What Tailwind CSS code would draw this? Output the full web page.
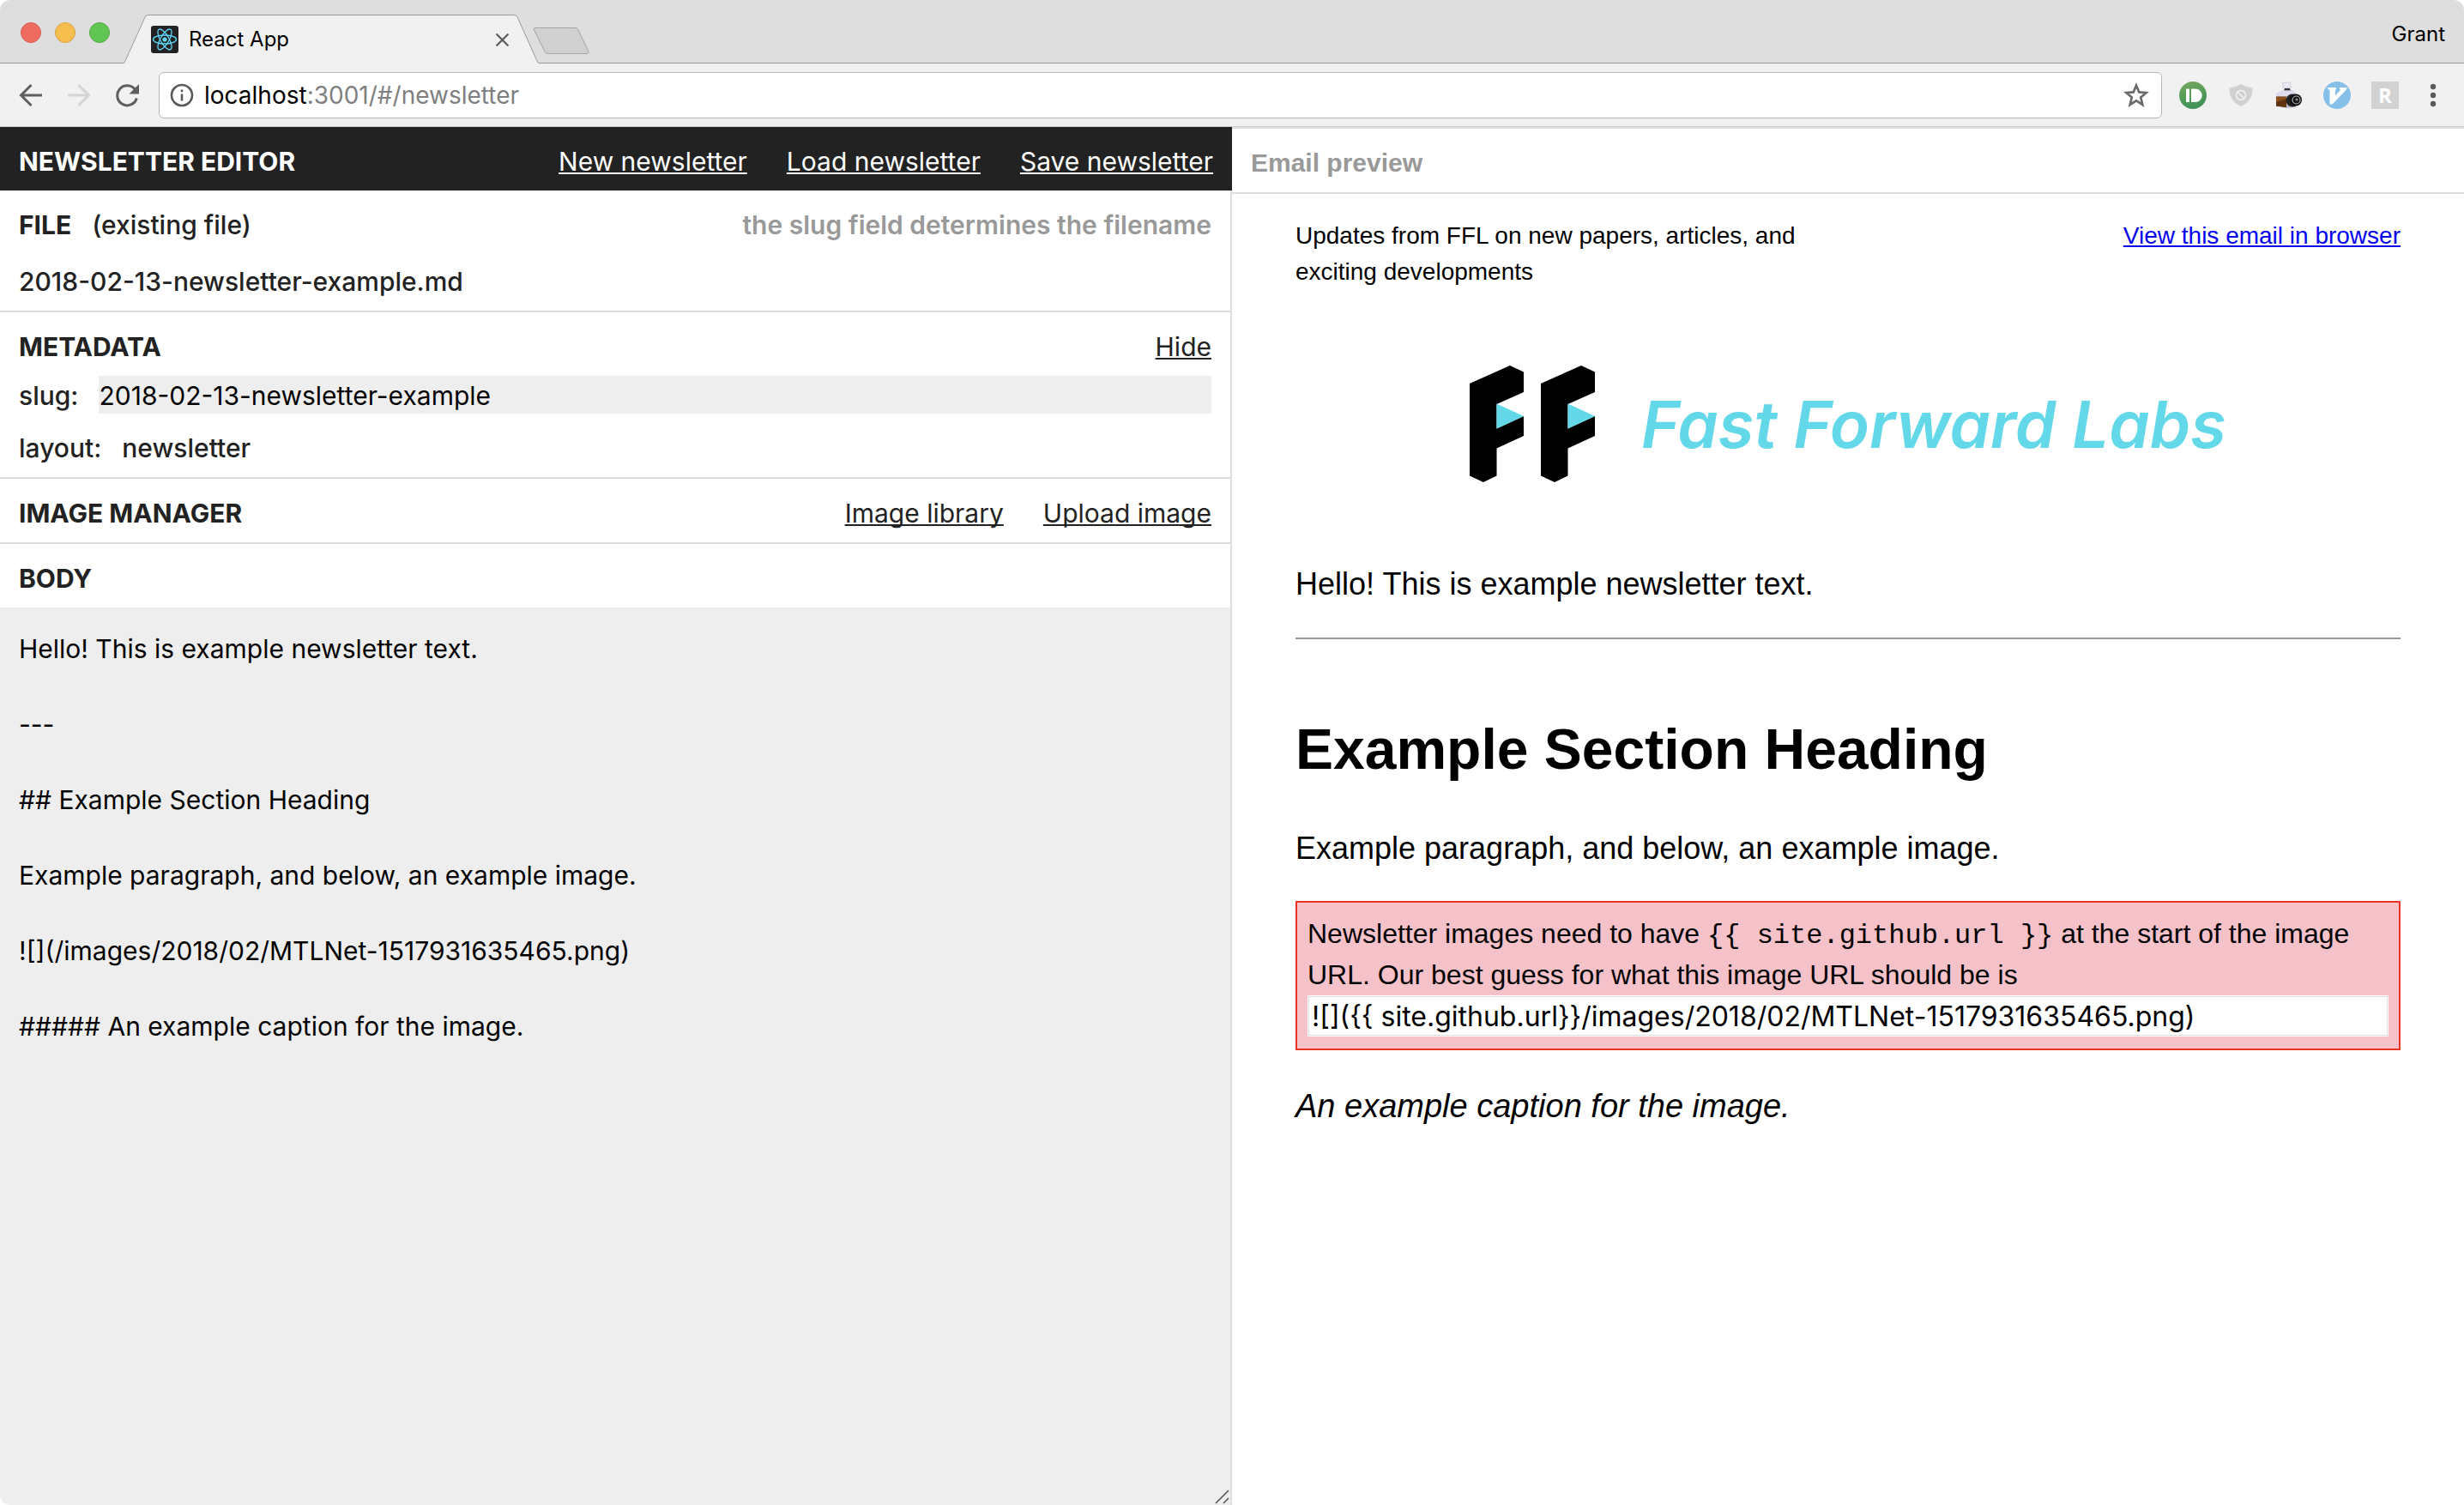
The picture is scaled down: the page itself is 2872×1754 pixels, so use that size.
<!DOCTYPE html>
<html lang="en">
<head>
<meta charset="utf-8">
<meta name="viewport" content="width=device-width, initial-scale=1">
<title>React App</title>
<script src="https://cdn.jsdelivr.net/npm/@tailwindcss/browser@4"></script>
</head>
<body class="bg-white font-['Inter',sans-serif] text-black">
<div class="flex h-screen flex-col overflow-hidden rounded-[12px] bg-white">

  <!-- Tab strip -->
  <div class="flex h-[74px] shrink-0 items-stretch border-b border-[#9b9b9b] bg-[#dedede]">
    <div class="flex items-center gap-4 pt-[3px] pl-6">
      <button aria-label="Close window" class="size-6 rounded-full border border-[#d8584f] bg-[#ed6b5f]"></button>
      <button aria-label="Minimize window" class="size-6 rounded-full border border-[#dba23f] bg-[#f5be4f]"></button>
      <button aria-label="Zoom window" class="size-6 rounded-full border border-[#4fa73f] bg-[#62c655]"></button>
    </div>
    <div class="relative ml-4 h-[74px] w-[484px] shrink-0">
      <svg class="absolute inset-0" width="484" height="74" viewBox="0 0 484 74" fill="none">
        <path d="M0 74 Q1 73.500 2 71 L25 20 Q26 17.500 29 17.500 L455 17.500 Q458 17.500 459 20 L482 71 Q483 73.500 484 74 Z" fill="#f1f1f1"/>
        <path d="M0 73.500 Q1 73.500 2 71 L25 20 Q26 17.500 29 17.500 L455 17.500 Q458 17.500 459 20 L482 71 Q483 73.500 484 73.500" stroke="#9b9b9b"/>
      </svg>
      <div class="relative flex h-full items-center gap-3 pt-[18px] pr-[35px] pl-8">
        <svg width="32" height="32" viewBox="0 0 32 32" fill="none" stroke="#61dafb" stroke-width="1.300">
          <rect width="32" height="32" rx="3" fill="#222" stroke="none"/>
          <circle cx="16" cy="16" r="2.600" fill="#61dafb" stroke="none"/>
          <ellipse cx="16" cy="16" rx="13.500" ry="5"/>
          <ellipse cx="16" cy="16" rx="13.500" ry="5" transform="rotate(60 16 16)"/>
          <ellipse cx="16" cy="16" rx="13.500" ry="5" transform="rotate(120 16 16)"/>
        </svg>
        <span class="flex-1 text-[24px] leading-8">React App</span>
        <button aria-label="Close tab">
          <svg width="15" height="15" viewBox="0 0 14 14" stroke="#5a5a5a" stroke-width="2"><path d="M0.500 0.500 L13.500 13.500 M13.500 0.500 L0.500 13.500"/></svg>
        </button>
      </div>
    </div>
    <button aria-label="New tab" class="-ml-2 pt-[22px]">
      <svg width="68" height="34" viewBox="0 0 68 34" fill="#d0d0d0" stroke="#a3a3a3">
        <path d="M4 1.500 H51 Q53 1.500 54 4 L65.500 28 Q67 31.500 64 31.500 H19 Q16 31.500 15 29 L2.500 4 Q1.500 1.500 4 1.500 Z"/>
      </svg>
    </button>
    <button class="ml-auto pt-[7px] pr-[22px] text-[24px] leading-8">Grant</button>
  </div>

  <!-- Toolbar -->
  <div class="flex h-[74px] shrink-0 items-center border-b border-[#cfcfcf] bg-[#f1f1f1] pr-5 pl-[22px]">
    <div class="flex items-center gap-7">
      <button aria-label="Back"><svg width="28" height="28" viewBox="0 0 28 28" fill="none" stroke="#5f5f5f" stroke-width="3"><path d="M27 14 H3 M14.500 2 L2.500 14 L14.500 26"/></svg></button>
      <button aria-label="Forward"><svg width="28" height="28" viewBox="0 0 28 28" fill="none" stroke="#d5d5d5" stroke-width="3"><path d="M1 14 H25 M13.500 2 L25.500 14 L13.500 26"/></svg></button>
      <button aria-label="Reload"><svg width="28" height="28" viewBox="0 0 28 28" fill="none" stroke="#5f5f5f" stroke-width="3"><path d="M23.500 7.500 A11.500 11.500 0 1 0 25.300 17.500"/><path d="M28 1 V12.500 H16.500 Z" fill="#5f5f5f" stroke="none"/></svg></button>
    </div>
    <div class="ml-[23px] flex h-[54px] flex-1 items-center rounded-[6px] border border-[#b6b6b6] bg-white pr-[13px] pl-3">
      <svg width="28" height="28" viewBox="0 0 28 28" fill="none" stroke="#5a5a5a" stroke-width="2.600"><circle cx="14" cy="14" r="12"/><path d="M14 12.500 V20.500 M14 7.500 V10.200"/></svg>
      <div role="textbox" aria-label="Address" class="ml-3 flex-1 text-[28px] leading-9 text-[#7f7f7f]"><span class="text-black">localhost</span>:3001/#/newsletter</div>
      <button aria-label="Bookmark"><svg width="32" height="32" viewBox="0 0 32 32" fill="none" stroke="#6a6a6a" stroke-width="2.700"><path d="M16 4.500 L19.300 12.400 L27.600 13 L21.200 18.500 L23.300 27 L16 22.400 L8.700 27 L10.800 18.500 L4.400 13 L12.700 12.400 Z"/></svg></button>
    </div>
    <div class="ml-5 flex items-center gap-6">
      <button aria-label="Pushbullet"><svg width="32" height="32" viewBox="0 0 32 32">
        <defs><linearGradient id="pb" x1="0" y1="0" x2="0.300" y2="1"><stop offset="0" stop-color="#76a85f"/><stop offset="1" stop-color="#3f9356"/></linearGradient></defs>
        <circle cx="16" cy="16" r="16" fill="url(#pb)"/><rect x="8" y="8.500" width="4" height="15.500" rx="0.500" fill="#fff"/><path d="M14 8.500 H19 A7.750 7.750 0 0 1 19 24 H14 Z" fill="#fff"/></svg></button>
      <button aria-label="Content blocker"><svg width="32" height="32" viewBox="0 0 32 32" fill="none">
        <path d="M16 3 Q22 7 29.500 7.500 Q30 23 16 29 Q2 23 2.500 7.500 Q10 7 16 3 Z" fill="#cfcfcf" stroke="#e2e2e2"/><circle cx="16" cy="16" r="5.500" stroke="#f3f3f3" stroke-width="1.500"/><path d="M12.200 12.200 L19.800 19.800" stroke="#f3f3f3" stroke-width="1.500"/></svg></button>
      <button aria-label="Screenshot"><svg width="32" height="32" viewBox="0 0 32 32">
        <path d="M8.500 1.500 L17.500 1 L18.500 7 L9.500 8 Z" fill="#e9e9f6" stroke="#b9b9c8" stroke-width="0.600"/><path d="M11 8 H17 L18 11 H10 Z" fill="#333"/>
        <path d="M1 14 L8 10.500 L20 10.500 L24 13.500 V30 L13 31 L1 29 Z" fill="#b9b9cc"/><path d="M1 14 L8 10.500 L20 10.500 L24 13.500 L13 17 L1 17 Z" fill="#dcdcec"/>
        <path d="M1 17.500 H13 V30 L1 28.500 Z" fill="#8a4f1e"/><path d="M1 24 L13 20 V30 L1 28.500 Z" fill="#5f3312"/>
        <circle cx="20" cy="22" r="7.500" fill="#222"/><circle cx="24" cy="21.500" r="7" fill="#111"/><circle cx="24.500" cy="21.500" r="4.500" fill="none" stroke="#b5b5b5" stroke-width="1.200"/><circle cx="25" cy="21" r="1.500" fill="#8f8f8f"/></svg></button>
      <button aria-label="Vimium"><svg width="32" height="32" viewBox="0 0 32 32">
        <circle cx="16" cy="16" r="16" fill="#86bfe8"/><path d="M5.500 7 H15 V9.500 H13.800 V16.500 L20.500 9.500 H19 V7 H27.500 L27 9.500 L10.500 26.500 H7.500 V9.500 H5.500 Z" fill="#fff"/></svg></button>
      <button aria-label="Readability" class="size-8 bg-[#d2d2d2] text-center font-['Open_Sans',sans-serif] text-[24px] leading-8 font-bold text-white">R</button>
      <button aria-label="Browser menu"><svg width="32" height="32" viewBox="0 0 32 32" fill="#5a5a5a"><circle cx="16" cy="6" r="3.200"/><circle cx="16" cy="16" r="3.200"/><circle cx="16" cy="26" r="3.200"/></svg></button>
    </div>
  </div>

  <!-- Page -->
  <div class="grid min-h-0 flex-1 grid-cols-2">

    <!-- Editor -->
    <main class="flex min-h-0 flex-col text-[30px] leading-[44px] text-[#222]">
      <header class="flex justify-between bg-[#222] px-[22px] pt-[18px] pb-3 text-white">
        <h1 class="font-bold">NEWSLETTER EDITOR</h1>
        <nav class="flex gap-[46px]">
          <a href="#new" class="underline decoration-2 underline-offset-2 [text-decoration-skip-ink:none]">New newsletter</a>
          <a href="#load" class="underline decoration-2 underline-offset-2 [text-decoration-skip-ink:none]">Load newsletter</a>
          <a href="#save" class="underline decoration-2 underline-offset-2 [text-decoration-skip-ink:none]">Save newsletter</a>
        </nav>
      </header>

      <div class="flex min-h-0 flex-1 flex-col border-r-2 border-[#ddd]">
        <section class="border-b-2 border-[#ddd] px-[22px] pt-[18px] pb-3">
          <div class="flex gap-6">
            <h2 class="font-bold">FILE</h2>
            <span class="font-medium">(existing file)</span>
            <span class="ml-auto font-semibold text-[#999]">the slug field determines the filename</span>
          </div>
          <p class="mt-[22px] font-medium">2018-02-13-newsletter-example.md</p>
        </section>

        <section class="border-b-2 border-[#ddd] px-[22px] pt-[18px] pb-3">
          <div class="flex justify-between">
            <h2 class="font-bold">METADATA</h2>
            <a href="#hide" class="underline decoration-2 underline-offset-2 [text-decoration-skip-ink:none]">Hide</a>
          </div>
          <div class="mt-3 flex gap-6">
            <label for="slug" class="pt-px font-medium">slug:</label>
            <input id="slug" type="text" value="2018-02-13-newsletter-example" class="h-11 min-w-0 flex-1 bg-[#eee] pt-[2px] text-black">
          </div>
          <div class="mt-[17px] flex gap-6 font-medium">
            <span>layout:</span>
            <span>newsletter</span>
          </div>
        </section>

        <section class="flex justify-between border-b-2 border-[#ddd] px-[22px] pt-[18px] pb-3">
          <h2 class="font-bold">IMAGE MANAGER</h2>
          <div class="flex gap-[46px]">
            <a href="#library" class="underline decoration-2 underline-offset-2 [text-decoration-skip-ink:none]">Image library</a>
            <a href="#upload" class="underline decoration-2 underline-offset-2 [text-decoration-skip-ink:none]">Upload image</a>
          </div>
        </section>

        <section class="flex min-h-0 flex-1 flex-col">
          <h2 class="px-[22px] pt-[18px] pb-3 font-bold"><label for="body">BODY</label></h2>
          <div class="relative flex min-h-0 flex-1">
            <textarea id="body" class="flex-1 resize-none bg-[#eee] px-[22px] py-[26px] text-black">Hello! This is example newsletter text.

---

## Example Section Heading

Example paragraph, and below, an example image.

![](/images/2018/02/MTLNet-1517931635465.png)

##### An example caption for the image.</textarea>
            <svg class="absolute right-px bottom-px" width="18" height="18" viewBox="0 0 18 18" stroke="#555" stroke-width="1.600"><path d="M2 17 L17 2 M11 17 L17 11"/></svg>
          </div>
        </section>
      </div>
    </main>

    <!-- Preview -->
    <aside class="min-h-0 overflow-hidden font-['Liberation_Sans',Arial,sans-serif]">
      <h2 class="border-y-2 border-[#ddd] px-[22px] pt-[18px] pb-3 text-[30px] leading-[44px] font-bold text-[#999]">Email preview</h2>
      <article class="px-[74px] pt-7">
        <div class="flex justify-between text-[28px] leading-[42px]">
          <p class="w-1/2">Updates from FFL on new papers, articles, and exciting developments</p>
          <a href="#browser" class="text-[#0000ee] underline decoration-2 underline-offset-2 [text-decoration-skip-ink:none]">View this email in browser</a>
        </div>

        <div class="mt-[88px] flex h-[136px] items-center justify-center gap-[54px]">
          <svg width="146" height="136" viewBox="0 0 146 136">
            <g id="f">
              <path d="M0 21 L47 0 L63 7.500 V31 L31.500 45 V73.500 L63 59 V82 L31.500 96.500 V128.500 L16 136 L0 128.500 Z"/>
              <path d="M31.500 44.500 L63 59 L31.500 73.500 Z" fill="#62d8e8"/>
            </g>
            <use href="#f" x="83"/>
          </svg>
          <span class="font-['Inter',sans-serif] text-[76px] leading-none font-semibold text-[#62d8e8] italic">Fast Forward Labs</span>
        </div>

        <p class="mt-[92px] text-[36px] leading-[54px]">Hello! This is example newsletter text.</p>
        <hr class="mt-[35px] border-t-2 border-[#999]">
        <h1 class="mt-[88px] text-[66px] leading-[80px] font-bold">Example Section Heading</h1>
        <p class="mt-[49px] text-[36px] leading-[54px]">Example paragraph, and below, an example image.</p>

        <div class="mt-[34px] border-2 border-[#ea3323] bg-[#f5c2ca] px-3 pt-3 pb-[14px] text-[32px] leading-[48px]">
          <label for="guess" class="block">Newsletter images need to have <code class="font-['Liberation_Mono',monospace] leading-none">{{ site.github.url }}</code> at the start of the image URL. Our best guess for what this image URL should be is</label>
          <input id="guess" type="text" readonly value="![]({{ site.github.url}}/images/2018/02/MTLNet-1517931635465.png)" class="block h-12 w-full border border-white bg-white px-1 pt-[2px] font-['Inter',sans-serif] shadow-[inset_0_0_0_1px_#dcdfe1]">
        </div>

        <p class="mt-9 text-[38px] leading-[58px] italic">An example caption for the image.</p>
      </article>
    </aside>
  </div>
</div>
</body>
</html>
